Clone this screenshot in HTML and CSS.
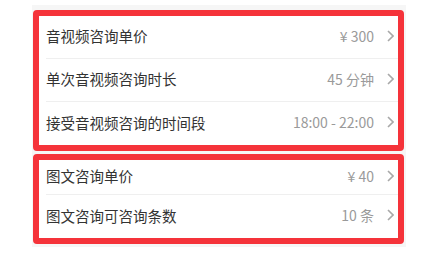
FILE: index.html
```html
<!DOCTYPE html>
<html lang="zh-CN">
<head>
<meta charset="utf-8">
<link rel="stylesheet" href="styles.css">
</head>
<body>
<div class="panel">
  <div class="card">
    <div class="row"><span class="label">音视频咨询单价</span><span class="value">¥ 300</span><svg class="chev" viewBox="0 0 7 12"><polyline points="1,1 6,6 1,11"/></svg></div>
    <div class="row"><span class="label">单次音视频咨询时长</span><span class="value">45 分钟</span><svg class="chev" viewBox="0 0 7 12"><polyline points="1,1 6,6 1,11"/></svg></div>
    <div class="row"><span class="label">接受音视频咨询的时间段</span><span class="value">18:00 - 22:00</span><svg class="chev" viewBox="0 0 7 12"><polyline points="1,1 6,6 1,11"/></svg></div>
  </div>
  <div class="card card--second">
    <div class="row row--short"><span class="label">图文咨询单价</span><span class="value">¥ 40</span><svg class="chev" viewBox="0 0 7 12"><polyline points="1,1 6,6 1,11"/></svg></div>
    <div class="row"><span class="label">图文咨询可咨询条数</span><span class="value">10 条</span><svg class="chev" viewBox="0 0 7 12"><polyline points="1,1 6,6 1,11"/></svg></div>
  </div>
</div>
</body>
</html>
```
FILE: styles.css
```css
html, body {
  margin: 0;
  padding: 0;
  background: #ffffff;
}
body {
  font-family: "Noto Sans CJK SC", "Noto Sans", sans-serif;
}
.panel {
  margin-left: 32px;
  margin-top: 5px;
  width: 374px;
  padding: 5px 0 3px;
  background: #f6f6f6;
}
.card {
  margin-left: 1px;
  width: 359px;
  background: #fff;
  border: 6px solid #f5333a;
  border-radius: 4px;
}
.card--second {
  margin-top: 3px;
}
.row {
  display: flex;
  align-items: center;
  box-sizing: border-box;
  height: 43px;
  padding-bottom: 3px;
  margin-left: 7px;
  padding-right: 4px;
  border-bottom: 1px solid #efefef;
}
.row:last-child {
  border-bottom: none;
}
.row--short {
  height: 35px;
}
.label {
  flex: 1;
  font-size: 14.5px;
  color: #333;
  white-space: nowrap;
}
.value {
  font-size: 14px;
  color: #9a9a9a;
  margin-right: 13px;
  white-space: nowrap;
}
.chev {
  width: 7px;
  height: 12px;
  flex: none;
}
.chev polyline {
  fill: none;
  stroke: #a8a8a8;
  stroke-width: 1.6;
}
```
